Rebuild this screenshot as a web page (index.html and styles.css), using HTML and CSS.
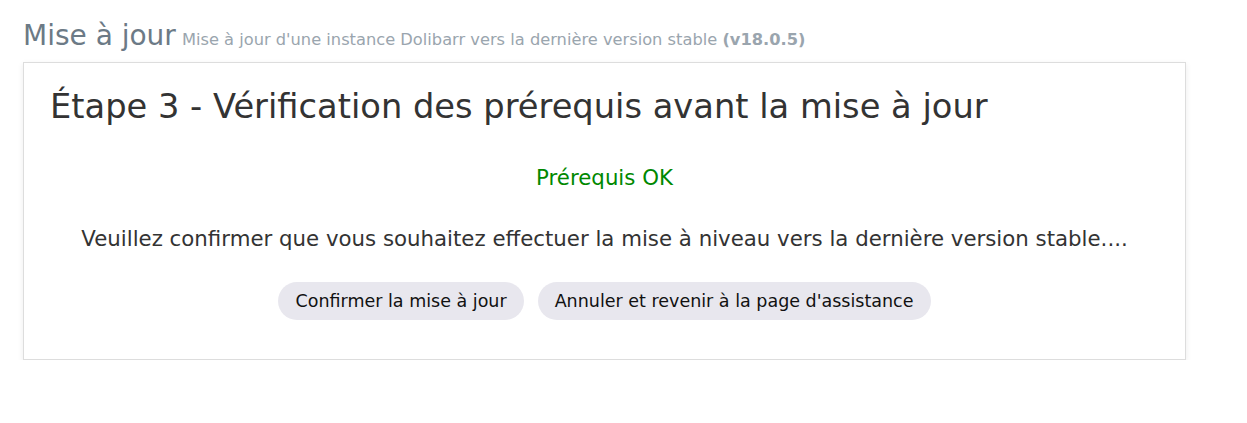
FILE: index.html
```html
<!DOCTYPE html>
<html lang="fr">
<head>
    <meta charset="UTF-8">
    <meta name="viewport" content="width=device-width, initial-scale=1.0">
    <title>Mise à jour</title>
    <link rel="stylesheet" href="styles.css">
</head>
<body>

<div class="upgrade">
    <div class="upgrade__header">
        <span class="upgrade__title">Mise à jour</span>
        <span class="upgrade__subtitle">Mise à jour d'une instance Dolibarr vers la dernière version stable <b>(v18.0.5)</b></span>
    </div>
    <div class="upgrade__card">
        <h1 class="upgrade__step">Étape 3 - Vérification des prérequis avant la mise à jour</h1>
        <p class="upgrade__ok">Prérequis OK</p>
        <p class="upgrade__text">Veuillez confirmer que vous souhaitez effectuer la mise à niveau vers la dernière version stable....</p>
        <div class="upgrade__actions">
            <button class="upgrade__button">Confirmer la mise à jour</button>
            <button class="upgrade__button">Annuler et revenir à la page d'assistance</button>
        </div>
    </div>
</div>

</body>
</html>
```

FILE: styles.css
```css
body {
    margin: 0;
    font-family: "DejaVu Sans", sans-serif;
    background: #fff;
    color: #333;
}
.upgrade {
    padding: 19px 61px 0 23px;
}
.upgrade__header {
    display: flex;
    align-items: baseline;
    gap: 6px;
    height: 43px;
}
.upgrade__title {
    font-size: 28px;
    color: #6c7a86;
}
.upgrade__subtitle {
    font-size: 16.25px;
    color: #9aa5ae;
}
.upgrade__card {
    border: 1px solid #ddd;
    box-shadow: 0 2px 6px rgba(0, 0, 0, 0.08);
    padding: 23px 26px 39px;
}
.upgrade__step {
    margin: 0;
    font-size: 33.7px;
    line-height: 42px;
    font-weight: normal;
    color: #333;
}
.upgrade__ok {
    margin: 38px 0 0;
    text-align: center;
    font-size: 21.3px;
    line-height: 24px;
    color: #080;
}
.upgrade__text {
    margin: 37px 0 0;
    text-align: center;
    font-size: 21.3px;
    line-height: 24px;
}
.upgrade__actions {
    display: flex;
    justify-content: center;
    gap: 14px;
    margin-top: 31px;
}
.upgrade__button {
    font-family: inherit;
    font-size: 17.5px;
    color: #111;
    background: #e8e7ee;
    border: none;
    border-radius: 20px;
    padding: 0 17px;
    height: 38px;
}
```
